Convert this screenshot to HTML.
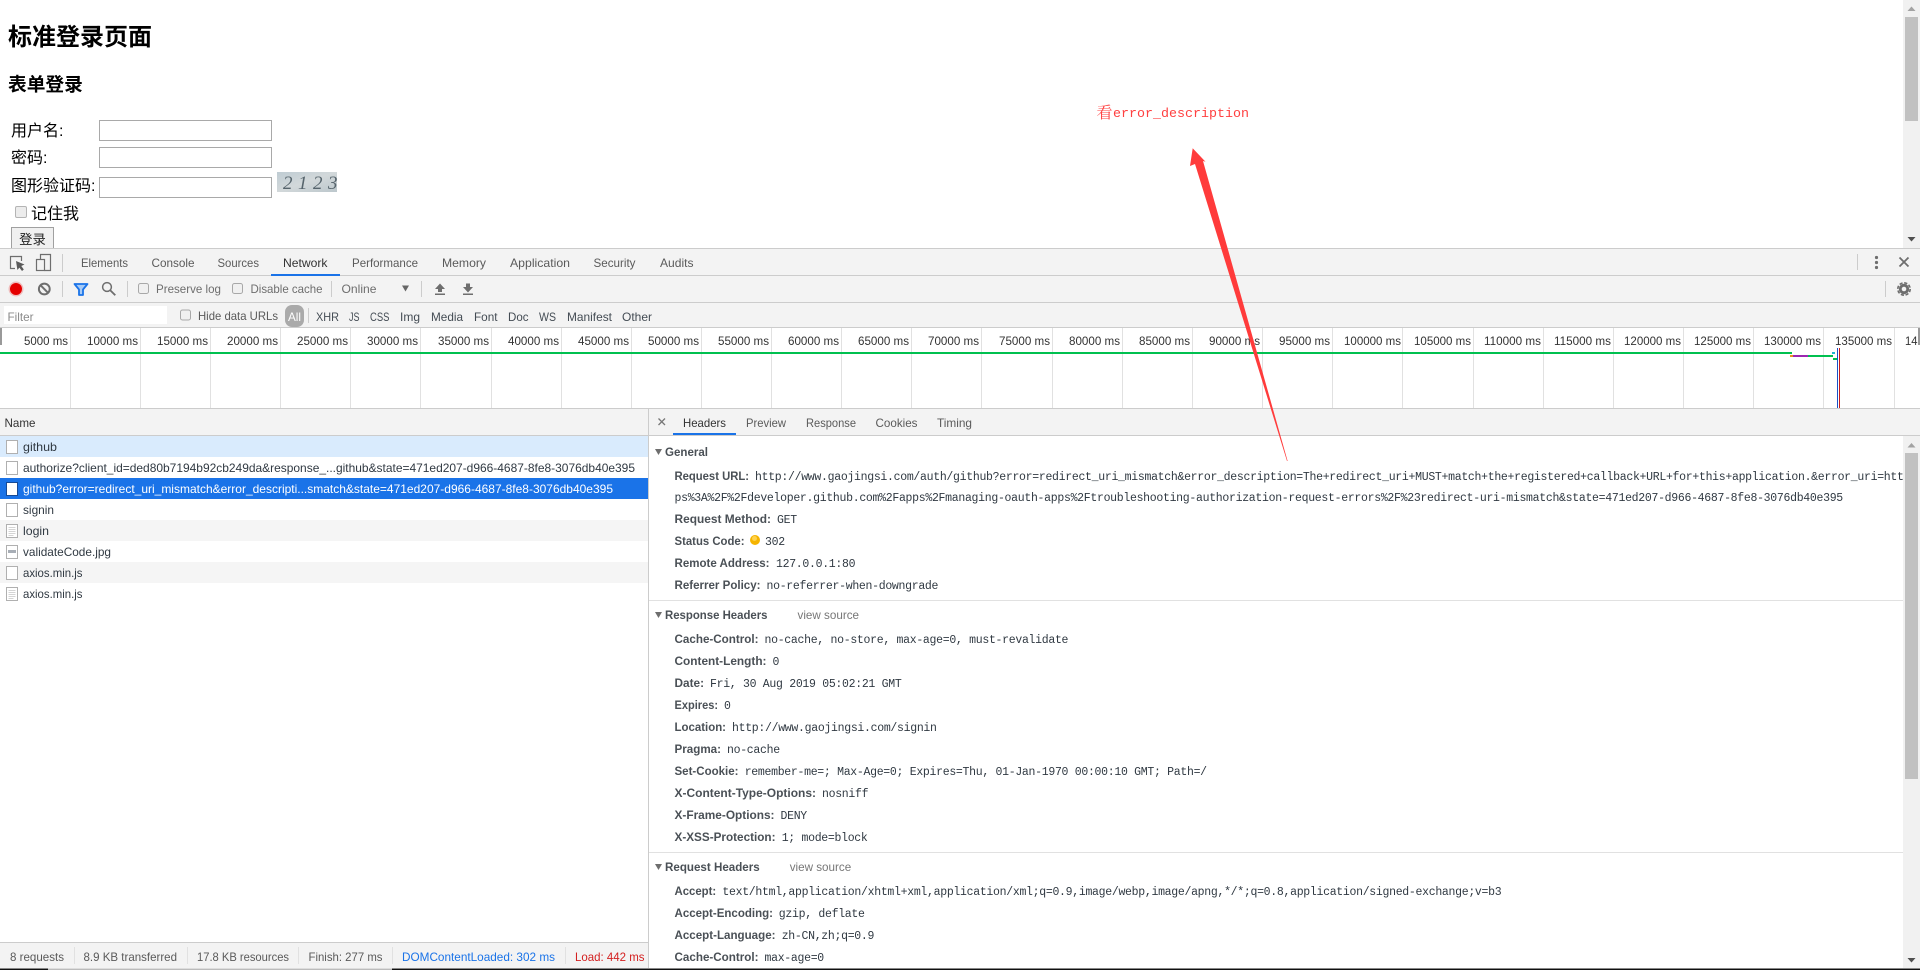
<!DOCTYPE html>
<html lang="zh-CN">
<head>
<meta charset="utf-8">
<title>标准登录页面</title>
<style>
html,body{margin:0;padding:0;width:1920px;height:970px;overflow:hidden;background:#fff}
#page{position:absolute;left:0;top:0;width:1920px;height:970px;overflow:hidden;font-family:"Liberation Sans","Noto Sans CJK SC",sans-serif;color:#000}
#page .a{position:absolute;white-space:nowrap}
h1,h2{margin:0;font-weight:700;position:absolute;white-space:nowrap;font-family:"Liberation Sans","Noto Sans CJK SC",sans-serif}
h1{left:8px;top:20px;font-size:24px;line-height:36px}
h2{left:8px;top:71px;font-size:18.72px;line-height:28px}
.lb{font-size:16px;line-height:24px}
input.tx{position:absolute;left:99px;width:173px;height:21px;box-sizing:border-box;border:1px solid #a9a9a9;background:#fff;margin:0;padding:0}
button{position:absolute;left:11px;top:227px;width:43px;height:26px;box-sizing:border-box;border:1px solid #a0a0a0;background:#f0f0f0;font:13.33px "Liberation Sans","Noto Sans CJK SC",sans-serif;padding:0 0 4px;margin:0;color:#222}
#cb{position:absolute;left:15px;top:206px;width:12px;height:12px;margin:0;appearance:none;-webkit-appearance:none;box-sizing:border-box;background:#ececec;border:1px solid #b4b4b4;border-radius:2px}
svg{position:absolute;left:0;top:0}
svg text{font-family:"Liberation Sans","Noto Sans CJK SC",sans-serif;font-size:12px;white-space:pre}
.t{fill:#5a5a5a}
.d{fill:#303942}
.b{fill:#4a5056;font-weight:700}
.m{font-family:"Liberation Mono",monospace !important;font-size:11.5px !important;letter-spacing:-.3px;fill:#303942}
.s{fill:#5a5a5a}
.k{fill:#6e6e6e}
.l{stroke:#cccccc;stroke-width:1;shape-rendering:crispEdges}
.g{stroke:#e1e1e1;stroke-width:1;shape-rendering:crispEdges}
.c{fill:#f0f0f0;stroke:#a8a8a8;stroke-width:1}
.ic{fill:#fff;stroke:#b0b0b0;stroke-width:1;shape-rendering:crispEdges}
</style>
</head>
<body>
<div id="page">
<h1>标准登录页面</h1>
<h2>表单登录</h2>
<div class="a lb" style="left:11px;top:120px">用户名:</div>
<div class="a lb" style="left:11px;top:147px">密码:</div>
<div class="a lb" style="left:11px;top:175px">图形验证码:</div>
<input class="tx" type="text" style="top:120px">
<input class="tx" type="text" style="top:147px">
<input class="tx" type="text" style="top:177px">
<input id="cb" type="checkbox">
<div class="a lb" style="left:31px;top:203px">记住我</div>
<button>登录</button>

<svg width="1920" height="970" viewBox="0 0 1920 970" xmlns="http://www.w3.org/2000/svg">
<defs>
<linearGradient id="cap" x1="0" x2="1" y1="0" y2="1"><stop offset="0" stop-color="#bfccd3"/><stop offset=".5" stop-color="#d2d8da"/><stop offset="1" stop-color="#bcc7cc"/></linearGradient>
</defs>
<!-- captcha -->
<rect x="277" y="172" width="60" height="20" fill="url(#cap)"/>
<text x="283" y="189" style="font-family:'Liberation Serif',serif;font-style:italic;font-size:19px;letter-spacing:5.5px" fill="#56646c">2123</text>

<!-- page scrollbar -->
<rect x="1903" y="0" width="17" height="248" fill="#f1f1f1"/>
<rect x="1905" y="17" width="13" height="104" fill="#c1c1c1"/>
<polygon points="1911.5,6.5 1915.5,11 1907.5,11" fill="#a3a3a3"/>
<polygon points="1907.5,237 1915.5,237 1911.5,241.5" fill="#505050"/>

<!-- devtools chrome -->
<rect x="0" y="248" width="1920" height="80" fill="#f3f3f3"/>
<line class="l" x1="0" x2="1920" y1="248.5" y2="248.5"/>
<line class="l" x1="0" x2="1920" y1="275.5" y2="275.5"/>
<line class="l" x1="0" x2="1920" y1="302.5" y2="302.5"/>
<line class="l" x1="0" x2="1920" y1="327.5" y2="327.5"/>

<!-- row 1 -->
<path d="M21.5 261V256.5H10.5V268.5H15" fill="none" stroke="#6e6e6e" stroke-width="1.2"/>
<polygon points="16,261 24.5,264.5 21.3,266 23.8,269.5 22,271 19.4,267.6 17.4,270" fill="#5a5a5a"/>
<path d="M40.5 260V254.5H50.5V270.5H44.5" fill="none" stroke="#6e6e6e" stroke-width="1.2"/>
<rect x="36.5" y="259.5" width="8" height="11" fill="none" stroke="#6e6e6e" stroke-width="1.2"/>
<line class="l" x1="62.5" x2="62.5" y1="254" y2="272"/>
<text class="t" x="81" y="267" textLength="47" lengthAdjust="spacingAndGlyphs">Elements</text>
<text class="t" x="151.5" y="267" textLength="43" lengthAdjust="spacingAndGlyphs">Console</text>
<text class="t" x="217.5" y="267" textLength="41.5" lengthAdjust="spacingAndGlyphs">Sources</text>
<text fill="#333" x="283" y="267" textLength="44.5" lengthAdjust="spacingAndGlyphs">Network</text>
<rect x="271" y="274" width="69" height="2" fill="#1a73e8"/>
<text class="t" x="352" y="267" textLength="66" lengthAdjust="spacingAndGlyphs">Performance</text>
<text class="t" x="442" y="267" textLength="44" lengthAdjust="spacingAndGlyphs">Memory</text>
<text class="t" x="510" y="267" textLength="60" lengthAdjust="spacingAndGlyphs">Application</text>
<text class="t" x="593.5" y="267" textLength="42" lengthAdjust="spacingAndGlyphs">Security</text>
<text class="t" x="660" y="267" textLength="33.5" lengthAdjust="spacingAndGlyphs">Audits</text>
<line class="l" x1="1857.5" x2="1857.5" y1="254" y2="270"/>
<circle cx="1876.5" cy="257.5" r="1.6" fill="#6e6e6e"/><circle cx="1876.5" cy="262.5" r="1.6" fill="#6e6e6e"/><circle cx="1876.5" cy="267.5" r="1.6" fill="#6e6e6e"/>
<path d="M1899.5 257.5L1908.5 266.5M1908.5 257.5L1899.5 266.5" stroke="#6e6e6e" stroke-width="1.8" fill="none"/>

<!-- row 2 -->
<circle cx="16" cy="289" r="7.5" fill="#e50000" opacity=".22"/>
<circle cx="16" cy="289" r="6" fill="#e50000"/>
<circle cx="44.3" cy="289" r="5.4" fill="none" stroke="#6e6e6e" stroke-width="2"/>
<path d="M40.5 285.2L48 292.8" stroke="#6e6e6e" stroke-width="2"/>
<line class="l" x1="62.5" x2="62.5" y1="281" y2="297"/>
<path d="M74.5 284H87.5L83 289.5V295H79V289.5Z" fill="#a7cbf6" stroke="#1a73e8" stroke-width="1.8" stroke-linejoin="round"/>
<circle cx="107" cy="287" r="4.4" fill="none" stroke="#6e6e6e" stroke-width="1.5"/>
<path d="M110.2 290.2L115.3 295.3" stroke="#6e6e6e" stroke-width="1.8"/>
<line class="l" x1="127.5" x2="127.5" y1="281" y2="297"/>
<rect class="c" x="138.5" y="283.5" width="10" height="10" rx="2"/>
<text class="k" x="156" y="293" textLength="65" lengthAdjust="spacingAndGlyphs">Preserve log</text>
<rect class="c" x="232.5" y="283.5" width="10" height="10" rx="2"/>
<text class="k" x="250.5" y="293" textLength="72" lengthAdjust="spacingAndGlyphs">Disable cache</text>
<line class="l" x1="331.5" x2="331.5" y1="281" y2="297"/>
<text class="k" x="341.5" y="293" textLength="35" lengthAdjust="spacingAndGlyphs">Online</text>
<polygon points="402,285.5 409,285.5 405.5,291.5" fill="#666"/>
<line class="l" x1="421.5" x2="421.5" y1="281" y2="297"/>
<polygon points="440,283.5 445,289 442,289 442,292 438,292 438,289 435,289" fill="#6e6e6e"/>
<rect x="435" y="293.5" width="10" height="1.5" fill="#6e6e6e"/>
<polygon points="468,292.5 473,287 470,287 470,283.5 466,283.5 466,287 463,287" fill="#6e6e6e"/>
<rect x="463" y="293.5" width="10" height="1.5" fill="#6e6e6e"/>
<line class="l" x1="1885.5" x2="1885.5" y1="281" y2="297"/>
<circle cx="1904" cy="289" r="6.2" fill="none" stroke="#6e6e6e" stroke-width="1.6" stroke-dasharray="3.2 1.67"/>
<circle cx="1904" cy="289" r="5.2" fill="#6e6e6e"/>
<circle cx="1904" cy="289" r="2.3" fill="#f3f3f3"/>

<!-- row 3 -->
<rect x="4" y="306" width="163" height="18" fill="#fff"/>
<text fill="#8a8a8a" x="7.5" y="321" textLength="26" lengthAdjust="spacingAndGlyphs">Filter</text>
<rect class="c" x="180.5" y="310" width="10" height="10" rx="2"/>
<text class="s" x="198" y="320" textLength="80" lengthAdjust="spacingAndGlyphs">Hide data URLs</text>
<rect x="285" y="305" width="19" height="22" rx="7" fill="#aaaaaa"/>
<text fill="#fff" x="288" y="321" textLength="13" lengthAdjust="spacingAndGlyphs">All</text>
<line class="l" x1="308.5" x2="308.5" y1="308" y2="323"/>
<text class="d" x="316" y="321" textLength="23" lengthAdjust="spacingAndGlyphs" opacity=".9">XHR</text>
<text class="d" x="349" y="321" textLength="10.5" lengthAdjust="spacingAndGlyphs" opacity=".9">JS</text>
<text class="d" x="370" y="321" textLength="19.5" lengthAdjust="spacingAndGlyphs" opacity=".9">CSS</text>
<text class="d" x="400" y="321" textLength="20" lengthAdjust="spacingAndGlyphs" opacity=".9">Img</text>
<text class="d" x="431" y="321" textLength="32" lengthAdjust="spacingAndGlyphs" opacity=".9">Media</text>
<text class="d" x="474" y="321" textLength="23.5" lengthAdjust="spacingAndGlyphs" opacity=".9">Font</text>
<text class="d" x="508" y="321" textLength="20.5" lengthAdjust="spacingAndGlyphs" opacity=".9">Doc</text>
<text class="d" x="539" y="321" textLength="17" lengthAdjust="spacingAndGlyphs" opacity=".9">WS</text>
<text class="d" x="567" y="321" textLength="45" lengthAdjust="spacingAndGlyphs" opacity=".9">Manifest</text>
<text class="d" x="622" y="321" textLength="30" lengthAdjust="spacingAndGlyphs" opacity=".9">Other</text>

<!-- timeline overview -->
<rect x="0" y="328" width="1920" height="80" fill="#fff"/>
<rect x="0" y="328" width="2" height="17" fill="#999"/>
<path class="g" d="M70.5 328V408M140.5 328V408M210.5 328V408M280.5 328V408M350.5 328V408M420.5 328V408M491.5 328V408M561.5 328V408M631.5 328V408M701.5 328V408M771.5 328V408M841.5 328V408M911.5 328V408M981.5 328V408M1052.5 328V408M1122.5 328V408M1192.5 328V408M1262.5 328V408M1332.5 328V408M1402.5 328V408M1473.5 328V408M1543.5 328V408M1613.5 328V408M1683.5 328V408M1753.5 328V408M1823.5 328V408M1894.5 328V408" fill="none"/>
<g fill="#333">
<text x="24" y="345" textLength="44" lengthAdjust="spacingAndGlyphs">5000 ms</text>
<text x="87" y="345" textLength="51" lengthAdjust="spacingAndGlyphs">10000 ms</text>
<text x="157" y="345" textLength="51" lengthAdjust="spacingAndGlyphs">15000 ms</text>
<text x="227" y="345" textLength="51" lengthAdjust="spacingAndGlyphs">20000 ms</text>
<text x="297" y="345" textLength="51" lengthAdjust="spacingAndGlyphs">25000 ms</text>
<text x="367" y="345" textLength="51" lengthAdjust="spacingAndGlyphs">30000 ms</text>
<text x="438" y="345" textLength="51" lengthAdjust="spacingAndGlyphs">35000 ms</text>
<text x="508" y="345" textLength="51" lengthAdjust="spacingAndGlyphs">40000 ms</text>
<text x="578" y="345" textLength="51" lengthAdjust="spacingAndGlyphs">45000 ms</text>
<text x="648" y="345" textLength="51" lengthAdjust="spacingAndGlyphs">50000 ms</text>
<text x="718" y="345" textLength="51" lengthAdjust="spacingAndGlyphs">55000 ms</text>
<text x="788" y="345" textLength="51" lengthAdjust="spacingAndGlyphs">60000 ms</text>
<text x="858" y="345" textLength="51" lengthAdjust="spacingAndGlyphs">65000 ms</text>
<text x="928" y="345" textLength="51" lengthAdjust="spacingAndGlyphs">70000 ms</text>
<text x="999" y="345" textLength="51" lengthAdjust="spacingAndGlyphs">75000 ms</text>
<text x="1069" y="345" textLength="51" lengthAdjust="spacingAndGlyphs">80000 ms</text>
<text x="1139" y="345" textLength="51" lengthAdjust="spacingAndGlyphs">85000 ms</text>
<text x="1209" y="345" textLength="51" lengthAdjust="spacingAndGlyphs">90000 ms</text>
<text x="1279" y="345" textLength="51" lengthAdjust="spacingAndGlyphs">95000 ms</text>
<text x="1344" y="345" textLength="57" lengthAdjust="spacingAndGlyphs">100000 ms</text>
<text x="1414" y="345" textLength="57" lengthAdjust="spacingAndGlyphs">105000 ms</text>
<text x="1484" y="345" textLength="57" lengthAdjust="spacingAndGlyphs">110000 ms</text>
<text x="1554" y="345" textLength="57" lengthAdjust="spacingAndGlyphs">115000 ms</text>
<text x="1624" y="345" textLength="57" lengthAdjust="spacingAndGlyphs">120000 ms</text>
<text x="1694" y="345" textLength="57" lengthAdjust="spacingAndGlyphs">125000 ms</text>
<text x="1764" y="345" textLength="57" lengthAdjust="spacingAndGlyphs">130000 ms</text>
<text x="1835" y="345" textLength="57" lengthAdjust="spacingAndGlyphs">135000 ms</text>
<text x="1905" y="345" textLength="12.5" lengthAdjust="spacingAndGlyphs">14</text>
</g>
<rect x="1918" y="328" width="2" height="17" fill="#999"/>
<rect x="0" y="352" width="1792" height="2" fill="#00c04f"/>
<rect x="1790" y="355" width="3" height="2" fill="#e89020"/>
<rect x="1793" y="355" width="15" height="2" fill="#9c27b0"/>
<rect x="1808" y="355" width="25" height="2" fill="#00c04f"/>
<rect x="1832" y="352" width="3" height="2" fill="#1fb5d0"/>
<rect x="1833" y="358" width="4" height="2" fill="#00c04f"/>
<rect x="1837" y="348" width="1" height="60" fill="#1a50c8"/>
<rect x="1839" y="348" width="1" height="60" fill="#c81e1e"/>
<line class="l" x1="0" x2="1920" y1="408.5" y2="408.5"/>

<!-- main split -->
<rect x="0" y="409" width="1920" height="26" fill="#f3f3f3"/>
<line class="l" x1="0" x2="1920" y1="435.5" y2="435.5"/>
<rect x="0" y="436" width="648" height="506" fill="#fff"/>
<rect x="649" y="436" width="1271" height="534" fill="#fff"/>
<line class="l" x1="648.5" x2="648.5" y1="409" y2="968"/>
<text fill="#333" x="4.5" y="427" textLength="31" lengthAdjust="spacingAndGlyphs">Name</text>

<!-- request rows -->
<rect x="0" y="436" width="648" height="21" fill="#d9ebfd"/>
<rect x="0" y="478" width="648" height="21" fill="#1a73e8"/>
<rect x="0" y="520" width="648" height="21" fill="#f5f5f5"/>
<rect x="0" y="562" width="648" height="21" fill="#f5f5f5"/>

<rect class="ic" x="6.5" y="440.5" width="11" height="13"/>
<rect class="ic" x="6.5" y="461.5" width="11" height="13"/>
<rect x="6.5" y="482.5" width="11" height="13" fill="#fff" stroke="#164a96"/>
<rect class="ic" x="6.5" y="503.5" width="11" height="13"/>
<rect class="ic" x="6.5" y="524.5" width="11" height="13"/>
<path d="M8.5 527.5H15.5M8.5 529.5H15.5M8.5 531.5H15.5M8.5 533.5H15.5M8.5 535.5H13.5" stroke="#d4d4d4" fill="none" shape-rendering="crispEdges"/>
<rect class="ic" x="6.5" y="545.5" width="11" height="13"/>
<rect x="8" y="550" width="8" height="3" fill="#a8aeb6"/>
<rect class="ic" x="6.5" y="566.5" width="11" height="13"/>
<rect class="ic" x="6.5" y="587.5" width="11" height="13"/>
<path d="M8.5 590.5H15.5M8.5 592.5H15.5M8.5 594.5H15.5M8.5 596.5H15.5M8.5 598.5H13.5" stroke="#d4d4d4" fill="none" shape-rendering="crispEdges"/>

<text class="d" x="23" y="451" textLength="34" lengthAdjust="spacingAndGlyphs">github</text>
<text class="d" x="23" y="472" textLength="612" lengthAdjust="spacingAndGlyphs">authorize?client_id=ded80b7194b92cb249da&amp;response_...github&amp;state=471ed207-d966-4687-8fe8-3076db40e395</text>
<text fill="#fff" x="23" y="493" textLength="590" lengthAdjust="spacingAndGlyphs">github?error=redirect_uri_mismatch&amp;error_descripti...smatch&amp;state=471ed207-d966-4687-8fe8-3076db40e395</text>
<text class="d" x="23" y="514" textLength="31" lengthAdjust="spacingAndGlyphs">signin</text>
<text class="d" x="23" y="535" textLength="26" lengthAdjust="spacingAndGlyphs">login</text>
<text class="d" x="23" y="556" textLength="88" lengthAdjust="spacingAndGlyphs">validateCode.jpg</text>
<text class="d" x="23" y="577" textLength="59.5" lengthAdjust="spacingAndGlyphs">axios.min.js</text>
<text class="d" x="23" y="598" textLength="59.5" lengthAdjust="spacingAndGlyphs">axios.min.js</text>

<!-- status bar -->
<rect x="0" y="942" width="648" height="26" fill="#f3f3f3"/>
<line class="l" x1="0" x2="648" y1="942.5" y2="942.5"/>
<text class="t" x="10" y="961" textLength="54" lengthAdjust="spacingAndGlyphs">8 requests</text>
<line class="g" x1="74.5" x2="74.5" y1="947" y2="964"/>
<text class="t" x="83.5" y="961" textLength="93.5" lengthAdjust="spacingAndGlyphs">8.9 KB transferred</text>
<line class="g" x1="187.5" x2="187.5" y1="947" y2="964"/>
<text class="t" x="197" y="961" textLength="92" lengthAdjust="spacingAndGlyphs">17.8 KB resources</text>
<line class="g" x1="298.5" x2="298.5" y1="947" y2="964"/>
<text class="t" x="308.5" y="961" textLength="74" lengthAdjust="spacingAndGlyphs">Finish: 277 ms</text>
<line class="g" x1="392.5" x2="392.5" y1="947" y2="964"/>
<text fill="#1a73e8" x="402" y="961" textLength="153" lengthAdjust="spacingAndGlyphs">DOMContentLoaded: 302 ms</text>
<line class="g" x1="565.5" x2="565.5" y1="947" y2="964"/>
<text fill="#d32020" x="575" y="961" textLength="69.5" lengthAdjust="spacingAndGlyphs">Load: 442 ms</text>

<!-- detail tabs -->
<path d="M658.5 418.5L665 425M665 418.5L658.5 425" stroke="#777" stroke-width="1.3" fill="none"/>
<text fill="#333" x="683" y="427" textLength="43" lengthAdjust="spacingAndGlyphs">Headers</text>
<rect x="673" y="433" width="63" height="2" fill="#1a73e8"/>
<text class="t" x="746" y="427" textLength="40" lengthAdjust="spacingAndGlyphs">Preview</text>
<text class="t" x="806" y="427" textLength="50" lengthAdjust="spacingAndGlyphs">Response</text>
<text class="t" x="875.5" y="427" textLength="42" lengthAdjust="spacingAndGlyphs">Cookies</text>
<text class="t" x="937" y="427" textLength="35" lengthAdjust="spacingAndGlyphs">Timing</text>

<!-- General -->
<polygon points="655,449 662,449 658.5,455" fill="#6e6e6e"/>
<text class="b" x="665" y="456" textLength="43" lengthAdjust="spacingAndGlyphs">General</text>
<text class="b" x="674.5" y="480" textLength="74.5" lengthAdjust="spacingAndGlyphs">Request URL:</text>
<text class="m" x="755" y="480">http://www.gaojingsi.com/auth/github?error=redirect_uri_mismatch&amp;error_description=The+redirect_uri+MUST+match+the+registered+callback+URL+for+this+application.&amp;error_uri=htt</text>
<text class="m" x="674.5" y="501">ps%3A%2F%2Fdeveloper.github.com%2Fapps%2Fmanaging-oauth-apps%2Ftroubleshooting-authorization-request-errors%2F%23redirect-uri-mismatch&amp;state=471ed207-d966-4687-8fe8-3076db40e395</text>
<text class="b" x="674.5" y="523" textLength="96.5" lengthAdjust="spacingAndGlyphs">Request Method:</text>
<text class="m" x="777" y="523">GET</text>
<text class="b" x="674.5" y="545" textLength="70" lengthAdjust="spacingAndGlyphs">Status Code:</text>
<circle cx="755" cy="540" r="5" fill="#f5b400"/>
<circle cx="754.5" cy="538.5" r="2.5" fill="#ffd24d"/>
<text class="m" x="765" y="545">302</text>
<text class="b" x="674.5" y="567" textLength="95" lengthAdjust="spacingAndGlyphs">Remote Address:</text>
<text class="m" x="776" y="567">127.0.0.1:80</text>
<text class="b" x="674.5" y="589" textLength="86" lengthAdjust="spacingAndGlyphs">Referrer Policy:</text>
<text class="m" x="766.5" y="589">no-referrer-when-downgrade</text>
<line class="g" x1="649" x2="1903" y1="600.5" y2="600.5"/>

<!-- Response Headers -->
<polygon points="655,612 662,612 658.5,618" fill="#6e6e6e"/>
<text class="b" x="665" y="619" textLength="102.5" lengthAdjust="spacingAndGlyphs">Response Headers</text>
<text fill="#777" x="797.5" y="619" textLength="61.5" lengthAdjust="spacingAndGlyphs">view source</text>
<text class="b" x="674.5" y="643" textLength="84" lengthAdjust="spacingAndGlyphs">Cache-Control:</text>
<text class="m" x="764.5" y="643">no-cache, no-store, max-age=0, must-revalidate</text>
<text class="b" x="674.5" y="665" textLength="92" lengthAdjust="spacingAndGlyphs">Content-Length:</text>
<text class="m" x="772.5" y="665">0</text>
<text class="b" x="674.5" y="687" textLength="29.5" lengthAdjust="spacingAndGlyphs">Date:</text>
<text class="m" x="710" y="687">Fri, 30 Aug 2019 05:02:21 GMT</text>
<text class="b" x="674.5" y="709" textLength="43.5" lengthAdjust="spacingAndGlyphs">Expires:</text>
<text class="m" x="724" y="709">0</text>
<text class="b" x="674.5" y="731" textLength="51.5" lengthAdjust="spacingAndGlyphs">Location:</text>
<text class="m" x="732" y="731">http://www.gaojingsi.com/signin</text>
<text class="b" x="674.5" y="753" textLength="46.5" lengthAdjust="spacingAndGlyphs">Pragma:</text>
<text class="m" x="727" y="753">no-cache</text>
<text class="b" x="674.5" y="775" textLength="64" lengthAdjust="spacingAndGlyphs">Set-Cookie:</text>
<text class="m" x="744.7" y="775">remember-me=; Max-Age=0; Expires=Thu, 01-Jan-1970 00:00:10 GMT; Path=/</text>
<text class="b" x="674.5" y="797" textLength="141.5" lengthAdjust="spacingAndGlyphs">X-Content-Type-Options:</text>
<text class="m" x="822" y="797">nosniff</text>
<text class="b" x="674.5" y="819" textLength="100" lengthAdjust="spacingAndGlyphs">X-Frame-Options:</text>
<text class="m" x="780.5" y="819">DENY</text>
<text class="b" x="674.5" y="841" textLength="101" lengthAdjust="spacingAndGlyphs">X-XSS-Protection:</text>
<text class="m" x="781.7" y="841">1; mode=block</text>
<line class="g" x1="649" x2="1903" y1="852.5" y2="852.5"/>

<!-- Request Headers -->
<polygon points="655,864 662,864 658.5,870" fill="#6e6e6e"/>
<text class="b" x="665" y="871" textLength="94.7" lengthAdjust="spacingAndGlyphs">Request Headers</text>
<text fill="#777" x="789.7" y="871" textLength="61.5" lengthAdjust="spacingAndGlyphs">view source</text>
<text class="b" x="674.5" y="895" textLength="41.7" lengthAdjust="spacingAndGlyphs">Accept:</text>
<text class="m" x="722.4" y="895">text/html,application/xhtml+xml,application/xml;q=0.9,image/webp,image/apng,*/*;q=0.8,application/signed-exchange;v=b3</text>
<text class="b" x="674.5" y="917" textLength="98.5" lengthAdjust="spacingAndGlyphs">Accept-Encoding:</text>
<text class="m" x="778.8" y="917">gzip, deflate</text>
<text class="b" x="674.5" y="939" textLength="101" lengthAdjust="spacingAndGlyphs">Accept-Language:</text>
<text class="m" x="781.7" y="939">zh-CN,zh;q=0.9</text>
<text class="b" x="674.5" y="961" textLength="84" lengthAdjust="spacingAndGlyphs">Cache-Control:</text>
<text class="m" x="764.5" y="961">max-age=0</text>

<!-- detail scrollbar -->
<rect x="1903" y="436" width="17" height="532" fill="#f1f1f1"/>
<rect x="1905" y="453" width="13" height="326" fill="#c1c1c1"/>
<polygon points="1911.5,443 1915.5,447.5 1907.5,447.5" fill="#a3a3a3"/>
<polygon points="1907.5,958 1915.5,958 1911.5,962.5" fill="#505050"/>

<!-- bottom edge -->
<rect x="0" y="968.5" width="1920" height="1.5" fill="#111"/>
<rect x="48" y="968.5" width="344" height="1.5" fill="#bbb"/>

<!-- annotation -->
<text x="1096.5" y="118" fill="#ff4040" style="font-size:16px;font-family:'Noto Serif CJK SC',serif">看</text>
<text x="1113" y="117" fill="#ff4040" style="font-family:'Liberation Mono',monospace;font-size:13.33px">error_description</text>
<polygon points="1192.7,148.3 1205.5,161.7 1203,161 1287.6,461 1287,461 1195,164 1190,166" fill="#ff3b3b"/>
</svg>
</div>
</body>
</html>
